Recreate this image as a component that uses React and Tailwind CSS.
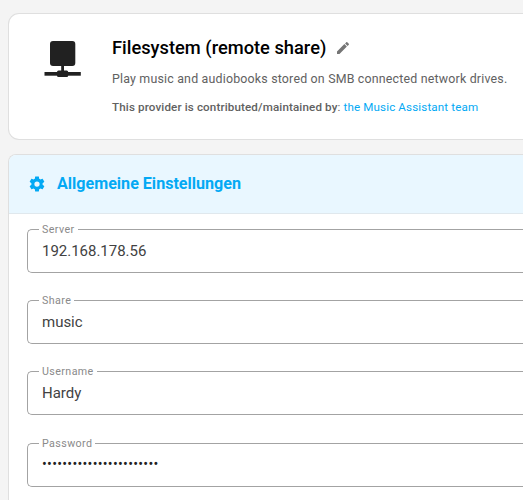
import React from 'react';

const fields = [
    { label: 'Server', value: '192.168.178.56' },
    { label: 'Share', value: 'music' },
    { label: 'Username', value: 'Hardy' },
    { label: 'Password', value: '•'.repeat(23), secret: true },
];

const ShareIcon = () => (
    <svg className="w-[38px] h-[38px] shrink-0" viewBox="0 0 38 38" fill="#212121">
        <rect x="6" y="1" width="25.3" height="25" rx="3" />
        <rect x="17.2" y="25" width="2.8" height="6" />
        <rect x="0.5" y="32" width="36.3" height="3.7" />
        <rect x="13" y="30.5" width="11.2" height="6.6" rx="1.5" />
    </svg>
);

const PencilIcon = () => (
    <svg className="w-4 h-4" viewBox="0 0 24 24" fill="#757575">
        <path d="M20.71,7.04C21.1,6.65 21.1,6 20.71,5.63L18.37,3.29C18,2.9 17.35,2.9 16.96,3.29L15.12,5.12L18.87,8.87M3,17.25V21H6.75L17.81,9.93L14.06,6.18L3,17.25Z" />
    </svg>
);

const CogIcon = () => (
    <svg className="w-[18px] h-[18px]" viewBox="0 0 24 24" fill="currentColor">
        <path d="M12,15.5A3.5,3.5 0 0,1 8.5,12A3.5,3.5 0 0,1 12,8.5A3.5,3.5 0 0,1 15.5,12A3.5,3.5 0 0,1 12,15.5M19.43,12.97C19.47,12.65 19.5,12.33 19.5,12C19.5,11.67 19.47,11.34 19.43,11L21.54,9.37C21.73,9.22 21.78,8.95 21.66,8.73L19.66,5.27C19.54,5.05 19.27,4.96 19.05,5.05L16.56,6.05C16.04,5.66 15.5,5.32 14.87,5.07L14.5,2.42C14.46,2.18 14.25,2 14,2H10C9.75,2 9.54,2.18 9.5,2.42L9.13,5.07C8.5,5.32 7.96,5.66 7.44,6.05L4.95,5.05C4.73,4.96 4.46,5.05 4.34,5.27L2.34,8.73C2.21,8.95 2.27,9.22 2.46,9.37L4.57,11C4.53,11.34 4.5,11.67 4.5,12C4.5,12.33 4.53,12.65 4.57,12.97L2.46,14.63C2.27,14.78 2.21,15.05 2.34,15.27L4.34,18.73C4.46,18.95 4.73,19.03 4.95,18.95L7.44,17.94C7.96,18.34 8.5,18.68 9.13,18.93L9.5,21.58C9.54,21.82 9.75,22 10,22H14C14.25,22 14.46,21.82 14.5,21.58L14.87,18.93C15.5,18.67 16.04,18.34 16.56,17.94L19.05,18.95C19.27,19.03 19.54,18.95 19.66,18.73L21.66,15.27C21.78,15.05 21.73,14.78 21.54,14.63L19.43,12.97Z" />
    </svg>
);

// The legend cuts its own gap into the outline
const Field = ({ label, value, secret }) => (
    <fieldset className="h-[49px] mb-[22.2px] border border-r-0 border-[#a3a3a3] rounded-l-[5px] pl-[11px]">
        <legend className="px-[3px] h-[11px] text-[10.7px] leading-[11px] tracking-[0.4px] text-[#8a8a8a] whitespace-nowrap">
            {label}
        </legend>
        <div
            className={
                secret
                    ? 'pl-[3px] pt-[4px] text-[14.2px] leading-[22px] tracking-[0.28px] text-[#212121]'
                    : 'pl-[3px] pt-[5px] text-[15px] leading-[22px] tracking-[-0.02px] text-[#424242]'
            }
        >
            {value}
        </div>
    </fieldset>
);

const App = () => {
    return (
        <div className="w-[523px] h-[500px] overflow-hidden bg-[#f4f4f4] pl-2 pt-[13px] font-['Roboto',sans-serif]">
            {/* Provider */}
            <div className="h-[127px] bg-white border border-r-0 border-[#dfdfdf] rounded-l-[11px] pl-[35px] pt-[22px] flex items-start">
                <div className="pt-[4px] w-[68px] shrink-0">
                    <ShareIcon />
                </div>
                <div className="whitespace-nowrap">
                    <div className="flex items-center h-6 gap-[9px]">
                        <h1 className="text-[18.3px] font-medium text-black">Filesystem (remote share)</h1>
                        <PencilIcon />
                    </div>
                    <p className="mt-[10px] text-[12.4px] leading-[18px] tracking-[0.19px] text-[#616161]">
                        Play music and audiobooks stored on SMB connected network drives.
                    </p>
                    <p className="mt-[10px] text-[11.6px] leading-[18px] tracking-[0.14px] text-[#616161]">
                        <b className="font-medium">This provider is contributed/maintained by</b>:{' '}
                        <a className="text-[#03a9f4]">the Music Assistant team</a>
                    </p>
                </div>
            </div>

            {/* General settings */}
            <div className="mt-[14px] h-[360px] bg-white border border-r-0 border-[#dfdfdf] rounded-tl-[8px] overflow-hidden">
                <div className="h-[59px] bg-[#e9f7ff] border-b border-[#e0e8ed] pl-[19px] flex items-center gap-[11px] text-[#03a9f4]">
                    <CogIcon />
                    <h2 className="text-[16.1px] font-bold">Allgemeine Einstellungen</h2>
                </div>
                <div className="pl-[18px] pt-[10px]">
                    {fields.map((f) => (
                        <Field key={f.label} {...f} />
                    ))}
                </div>
            </div>
        </div>
    );
};

export default App;
